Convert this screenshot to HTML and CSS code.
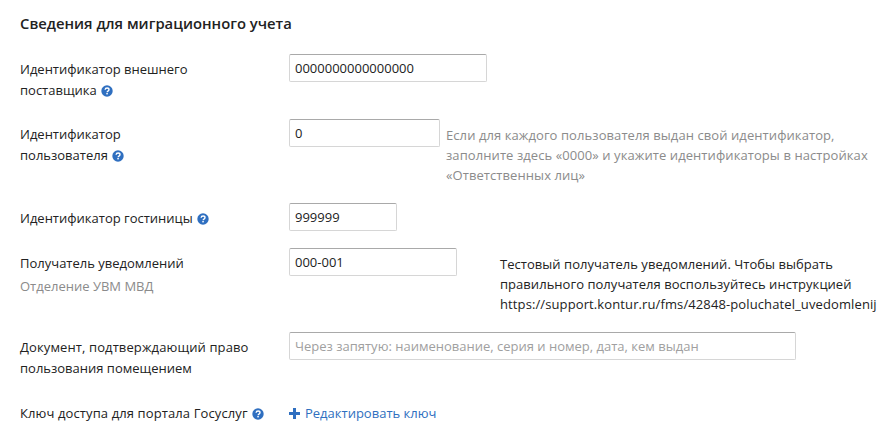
FILE: index.html
```html
<!DOCTYPE html>
<html lang="ru">
<head>
<meta charset="utf-8">
<title>Сведения для миграционного учета</title>
<link rel="stylesheet" href="styles.css">
</head>
<body>
<svg class="sprite" width="0" height="0" aria-hidden="true">
  <symbol id="help" viewBox="0 0 12 12">
    <circle cx="6" cy="6" r="5.7" fill="#2f6fc0"/>
    <path d="M4.1 4.7C4.2 3.6 5 3 6.1 3c1.1 0 1.9.6 1.9 1.6 0 .8-.5 1.2-1.1 1.6-.5.3-.7.5-.7 1" fill="none" stroke="#fff" stroke-width="1.4"/>
    <rect x="5.3" y="8" width="1.5" height="1.4" fill="#fff"/>
  </symbol>
</svg>
<main class="form">
  <h2 class="title">Сведения для миграционного учета</h2>

  <div class="row row-provider">
    <div class="label">Идентификатор внешнего<br>поставщика <svg class="help"><use href="#help"/></svg></div>
    <div class="field"><input class="input w-198" value="0000000000000000"></div>
  </div>

  <div class="row row-user">
    <div class="label">Идентификатор<br>пользователя <svg class="help"><use href="#help"/></svg></div>
    <div class="field">
      <input class="input w-151" value="0">
      <p class="hint muted">Если для каждого пользователя выдан свой идентификатор, заполните здесь «0000» и укажите идентификаторы в настройках «Ответственных лиц»</p>
    </div>
  </div>

  <div class="row row-hotel">
    <div class="label">Идентификатор гостиницы <svg class="help"><use href="#help"/></svg></div>
    <div class="field"><input class="input w-108" value="999999"></div>
  </div>

  <div class="row row-recipient">
    <div class="label">Получатель уведомлений<div class="sub muted">Отделение УВМ МВД</div></div>
    <div class="field">
      <input class="input w-168" value="000-001">
      <p class="hint hint-dark">Тестовый получатель уведомлений. Чтобы выбрать правильного получателя воспользуйтесь инструкцией <span class="wide">https://support.kontur.ru/fms/42848-poluchatel_uvedomlenij</span></p>
    </div>
  </div>

  <div class="row row-document">
    <div class="label"><span class="wide">Документ, подтверждающий право</span><br>пользования помещением</div>
    <div class="field"><input class="input w-507" placeholder="Через запятую: наименование, серия и номер, дата, кем выдан"></div>
  </div>

  <div class="row row-key">
    <div class="label"><span class="wide">Ключ доступа для портала Госуслуг</span> <svg class="help"><use href="#help"/></svg></div>
    <div class="field">
      <a class="link" href="#"><svg class="plus" viewBox="0 0 11 11"><path d="M4 0h3v4h4v3H7v4H4V7H0V4h4z" fill="#2f6fc0"/></svg>Редактировать ключ</a>
    </div>
  </div>
</main>
</body>
</html>
```

FILE: styles.css
```css
* { box-sizing: border-box; }
html, body { margin: 0; padding: 0; background: #fff; }
body {
  width: 890px;
  height: 440px;
  overflow: hidden;
  font-family: "Open Sans", "Noto Sans", sans-serif;
  font-size: 13px;
  line-height: 21px;
  color: #222;
}
.sprite { position: absolute; }
.form { padding: 13px 0 0 20px; }
.title {
  margin: 0 0 20px;
  font-size: 14.8px;
  line-height: 21px;
  font-weight: 600;
  color: #222;
}
.row { display: flex; }
.label { width: 269px; flex: none; padding-top: 5px; }
.wide { letter-spacing: 0.11px; }
.sub { margin-top: 2px; }
.field { display: flex; align-items: flex-start; }
.muted { color: #8b8b8b; }
.input {
  display: block;
  height: 28px;
  padding: 0 5px;
  border: 1px solid #d6d6d6;
  border-top-color: #a9a9a9;
  border-radius: 2px;
  background: #fff;
  font: inherit;
  color: #222;
  outline: none;
}
.input::placeholder { color: #a0a0a0; opacity: 1; }
.w-198 { width: 198px; }
.w-151 { width: 151px; }
.w-108 { width: 108px; }
.w-168 { width: 168px; }
.w-507 { width: 507px; }
.hint { margin: 0; line-height: 20px; letter-spacing: 0.08px; }
.row-user .hint { width: 440px; margin: 6px 0 0 6px; }
.hint-dark { width: 390px; margin: 6px 0 0 43px; letter-spacing: 0.04px; }
.help { width: 12px; height: 12px; margin-left: 1px; vertical-align: -1.5px; }
.link { display: flex; align-items: center; color: #2f6fc0; text-decoration: none; }
.plus { width: 11px; height: 11px; margin-right: 5px; flex: none; }
.row-provider { height: 65px; }
.row-user { height: 84px; }
.row-hotel { height: 45px; }
.row-recipient { height: 84px; }
.row-document { height: 66px; }
.row-key .field { padding-top: 5px; }
```
